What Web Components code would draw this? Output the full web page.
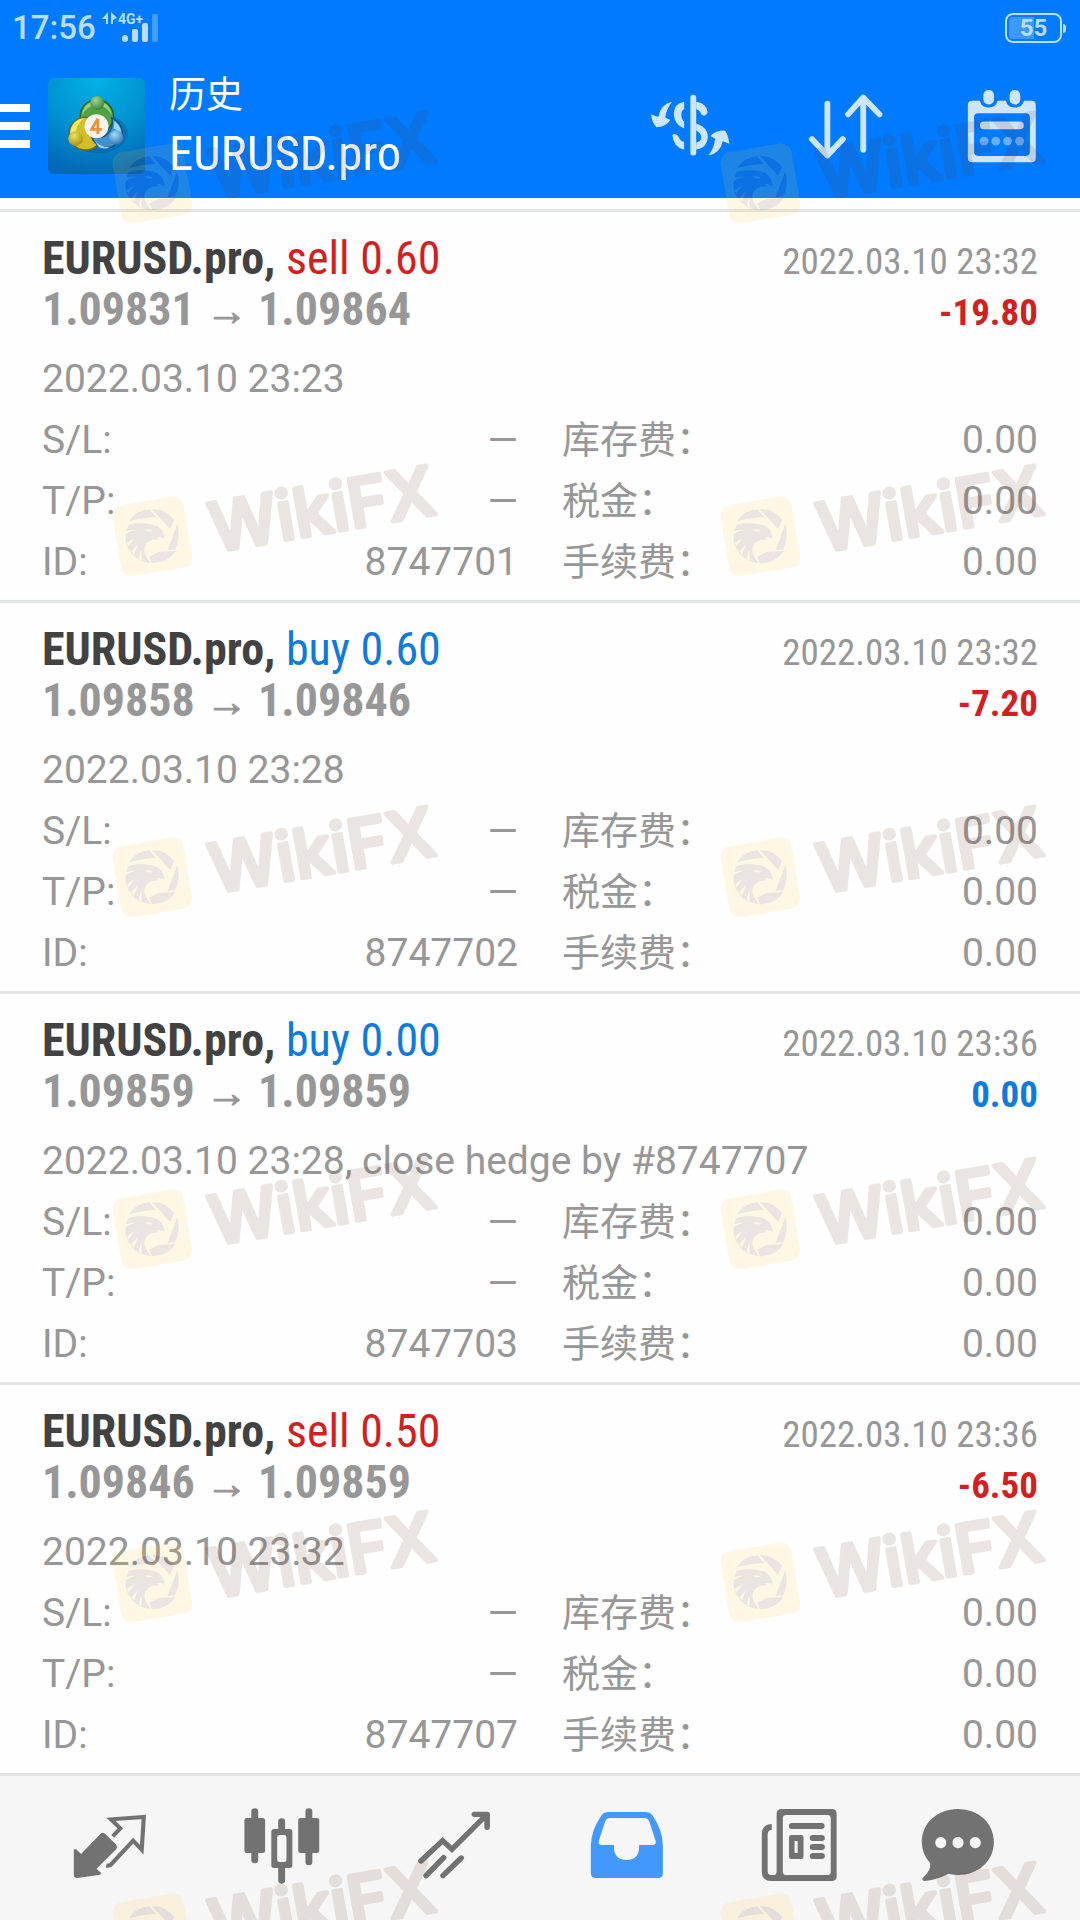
<!DOCTYPE html>
<html lang="zh-CN">
<head>
<meta charset="utf-8">
<meta name="viewport" content="width=device-width, initial-scale=1">
<title>历史</title>
<style>
  html, body { margin: 0; background: #fefefe; }
  body { font-family: Roboto, "Noto Sans CJK SC", sans-serif; }
</style>
</head>
<body>
<history-app></history-app>

<script>
const CONDENSED = '"Roboto Condensed", "Liberation Sans Narrow", Roboto, "Noto Sans CJK SC", sans-serif';

function define(name, html, setup) {
  const template = document.createElement('template');
  customElements.define(name, class extends HTMLElement {
    connectedCallback() {
      if (this.shadowRoot) return;
      const root = this.attachShadow({ mode: 'open' });
      template.innerHTML = typeof html === 'function' ? html(this) : html;
      root.append(template.content.cloneNode(true));
      if (setup) setup(this, root);
    }
  });
}

/* Time, signal strength and battery */
define('status-bar', `
  <style>
    :host { display: flex; justify-content: space-between; align-items: center; height: 56px; padding: 0 14px 0 12px; box-sizing: border-box; color: #b9dcff; }
    .left { display: flex; align-items: center; gap: 6px; }
    time { font-size: 33px; line-height: 56px; font-weight: 500; }
    svg { display: block; }
    .battery { display: flex; align-items: center; gap: 1px; }
    .cell { display: flex; align-items: center; justify-content: center; box-sizing: border-box; width: 57px; height: 30px; border: 2px solid; border-radius: 8px; font-size: 24px; line-height: 26px; font-weight: 700;
      background: linear-gradient(90deg, #3d98ff 52%, transparent 52%) content-box; padding: 2px; }
    .nub { width: 3px; height: 9px; border-radius: 0 3px 3px 0; background: currentColor; }
  </style>
  <div class="left">
    <time>17:56</time>
    <svg width="58" height="36" viewBox="102 9 58 36" fill="currentColor" aria-hidden="true">
      <path d="M108 11V23H106V18H102ZM111 11V23H113V19L117 17Z"/>
      <text x="118" y="23" font-family="Roboto, sans-serif" font-size="14" font-weight="700">4G+</text>
      <rect x="122" y="34" width="6" height="7" rx="3"/>
      <rect x="132" y="28" width="6" height="13" rx="2"/>
      <rect x="142" y="22" width="6" height="19" rx="2"/>
      <rect x="152" y="13" width="6" height="28" rx="2" opacity=".35"/>
    </svg>
  </div>
  <div class="battery"><span class="cell">55</span><span class="nub"></span></div>
`);

/* MetaTrader style app emblem */
define('app-emblem', `
  <style>:host { display: block; } svg { display: block; }</style>
  <svg width="97" height="96" viewBox="22 22 292 288" preserveAspectRatio="none" aria-hidden="true">
    <defs>
      <radialGradient id="bg" cx=".5" cy="0" r="1"><stop offset="0" stop-color="#03b2e6"/><stop offset=".55" stop-color="#0191d2"/><stop offset="1" stop-color="#0468b8"/></radialGradient>
      <radialGradient id="g" cx=".4" cy=".3" r=".8"><stop offset="0" stop-color="#a6d592"/><stop offset="1" stop-color="#2b7d2e"/></radialGradient>
      <radialGradient id="y" cx=".4" cy=".3" r=".8"><stop offset="0" stop-color="#efe060"/><stop offset="1" stop-color="#a08a08"/></radialGradient>
      <radialGradient id="b" cx=".4" cy=".3" r=".8"><stop offset="0" stop-color="#a4dcf8"/><stop offset="1" stop-color="#1b68ae"/></radialGradient>
    </defs>
    <rect x="22" y="22" width="292" height="288" rx="18" fill="url(#bg)"/>
    <ellipse cx="172" cy="188" rx="90" ry="60" fill="#044a80" opacity=".3"/>
    <g stroke-width="4">
      <circle cx="169" cy="137" r="50" fill="#54a044" stroke="#24601c"/>
      <path d="M124 134Q130 94 169 92Q208 94 214 134Q198 104 169 103Q140 104 124 134Z" fill="#9bd084"/>
      <circle cx="135" cy="189" r="49" fill="#d2bf28" stroke="#736b10"/>
      <path d="M90 188Q92 148 130 143Q108 160 103 196Z" fill="#f4e76c"/>
      <path d="M152 196A49 49 0 0 0 246 194Q248 158 214 142Q222 176 196 194Q176 206 152 196Z" fill="#3c93d3" stroke="#174f86"/>
      <path d="M222 151Q245 168 242 196Q232 176 220 174ZM160 207Q182 232 208 229Q194 238 176 230Z" fill="#9ed5f4"/>
    </g>
    <circle cx="170" cy="97" r="21" fill="url(#g)"/>
    <circle cx="105" cy="204" r="22" fill="url(#y)"/>
    <circle cx="227" cy="201" r="22" fill="url(#b)"/>
    <circle cx="168" cy="167" r="36" fill="#f7f4ef"/>
    <path d="M172 144L153 176H184M172 144V190" fill="none" stroke="#ec9138" stroke-width="8"/>
  </svg>
`);

/* Icon set: each drawing carries its own view box */
const ICONS = {
  currency: ['319 262 232 225', `
    <rect x="436" y="282" width="17" height="180" rx="8"/>
    <path d="M418 303Q388 308 388 340Q390 372 418 382V362Q409 352 410 340Q410 328 418 325ZM453 303Q484 308 486 334Q480 350 467 340Q465 328 453 325ZM453 367Q487 378 487 408Q484 440 453 445V424Q468 420 468 408Q466 395 453 388ZM384 401Q392 394 402 406Q406 418 418 422V445Q386 436 384 401Z"/>
    <path d="M383 303Q368 322 363 349L378 357Q365 378 338 378Q324 365 322 340L343 348Q350 310 383 303ZM488 462Q505 440 508 412L494 404Q508 388 536 388Q546 400 549 427L530 420Q522 457 488 462Z"/>`],
  sort: ['774 262 232 225', `
    <path d="M836 308V460M791 413L836 462L881 413M940 292V445M896 340L940 290L987 340" fill="none" stroke="currentColor" stroke-width="17" stroke-linecap="round" stroke-linejoin="round"/>`],
  calendar: ['1226 262 232 225', `
    <path fill-rule="evenodd" d="M1256 300H1278Q1282 320 1303 320Q1325 320 1329 300H1353Q1358 320 1379 320Q1401 320 1406 300H1428Q1440 300 1440 313V469Q1440 482 1428 482H1256Q1243 482 1243 469V313Q1243 300 1256 300ZM1273 337Q1261 337 1261 350V450Q1261 463 1273 463H1410Q1423 463 1423 450V350Q1423 337 1410 337Z"/>
    <rect x="1288" y="268" width="31" height="43" rx="15"/><rect x="1364" y="268" width="31" height="43" rx="15"/>
    <rect x="1278" y="361" width="127" height="23" rx="11"/>
    <g opacity=".5"><circle cx="1290" cy="419" r="13"/><circle cx="1324" cy="419" r="13"/><circle cx="1358" cy="419" r="13"/><circle cx="1393" cy="419" r="13"/></g>`],
  quotes: ['204 204 232 228', `
    <path d="M294 280Q300 276 306 281L338 314Q343 321 338 328L281 386L295 400Q293 404 288 405L224 414Q216 414 215 406V328Q222 326 225 331L236 342Z"/>
    <path d="M328 289L350 265L323 238L418 231L412 329L387 302L328 368Q319 379 309 377" fill="none" stroke="currentColor" stroke-width="12"/>`],
  chart: ['702 204 232 228', `
    <path d="M739 215V360M896 215V366M817 245V275M817 380V421" stroke="currentColor" stroke-width="20" stroke-linecap="round"/>
    <rect x="709" y="234" width="60" height="105" rx="7"/><rect x="865" y="234" width="61" height="105" rx="7"/>
    <path fill-rule="evenodd" d="M795 267H840Q848 267 848 275V376Q848 384 840 384H795Q787 384 787 376V275Q787 267 795 267ZM811 285Q804 285 804 292V359Q804 366 811 366H824Q831 366 831 359V292Q831 285 824 285Z"/>`],
  trend: ['1201 204 232 228', `
    <g fill="none" stroke="currentColor" stroke-width="16" stroke-linecap="round" stroke-linejoin="round">
      <path d="M1221 363L1284 302L1311 328L1408 228M1236 407L1287 353M1285 407L1338 354" stroke-linejoin="miter"/>
      <path d="M1376 223H1413V262"/></g>
    <path d="M1385 223H1420V258Z"/>`],
  inbox: ['134 204 232 228', `
    <path fill-rule="evenodd" d="M198 216H308Q320 216 326 224Q357 272 357 318V400Q357 414 343 414H162Q148 414 148 400V318Q148 272 180 224Q186 216 198 216ZM204 234Q194 234 190 243L171 303Q169 315 180 315H215Q213 360 252 360Q290 360 288 315H327Q338 315 336 303L317 243Q313 234 303 234Z"/>`],
  news: ['637 204 232 228', `
    <path fill-rule="evenodd" d="M706 207H851Q865 207 865 221V409Q865 423 851 423H676Q648 423 648 395V282Q648 253 677 252V269Q665 270 665 284V392Q665 405 675 405H681Q691 405 691 395V221Q691 207 706 207ZM719 225Q709 225 709 235V395Q709 405 719 405H838Q848 405 848 395V235Q848 225 838 225Z"/>
    <rect x="727" y="249" width="103" height="18" rx="8"/>
    <path fill-rule="evenodd" d="M734 285H762Q769 285 769 292V350Q769 357 762 357H734Q727 357 727 350V292Q727 285 734 285ZM743 303V339H752V303Z"/>
    <rect x="787" y="285" width="44" height="18" rx="9"/><rect x="787" y="312" width="44" height="18" rx="9"/><rect x="787" y="339" width="44" height="18" rx="9"/>`],
  chat: ['1098 204 232 228', `
    <path fill-rule="evenodd" d="M1214 207C1274 207 1318 250 1318 306C1318 365 1271 405 1214 405Q1200 405 1187 401Q1150 420 1117 423Q1106 421 1114 411Q1137 390 1133 369Q1109 341 1109 306C1109 250 1154 207 1214 207ZM1164 291a16 17 0 1 0 .1 0ZM1214 291a16 17 0 1 0 .1 0ZM1264 291a16 17 0 1 0 .1 0Z"/>`]
};
define('ui-icon', el => {
  const [box, shapes] = ICONS[el.getAttribute('name')];
  return `<style>:host { display: block; } svg { display: block; width: 80px; height: 76px; }</style>
  <svg viewBox="${box}" preserveAspectRatio="none" fill="currentColor" aria-hidden="true">${shapes}</svg>`;
});

define('app-header', `
  <style>
    :host { display: block; background: #007bff; }
    .bar { display: flex; align-items: center; height: 142px; padding-bottom: 2px; box-sizing: border-box; color: #fff; }
    button { border: 0; padding: 0; margin: 0; background: none; color: inherit; font: inherit; cursor: pointer; }
    .menu { display: flex; flex-direction: column; gap: 10px; width: 30px; margin-right: 18px; }
    .menu span { height: 8px; background: currentColor; }
    .titles { flex: 1; min-width: 0; margin-left: 24px; }
    h1, p { margin: 0; font-weight: 400; white-space: nowrap; }
    h1 { font-size: 37px; line-height: 56px; }
    p { font-family: ${CONDENSED}; font-size: 49px; line-height: 60px; }
    .actions { display: flex; color: #cde5fd; }
    .actions button { display: flex; align-items: center; justify-content: center; width: 156px; height: 140px; }
  </style>
  <status-bar></status-bar>
  <div class="bar">
    <button class="menu" aria-label="菜单"><span></span><span></span><span></span></button>
    <app-emblem></app-emblem>
    <div class="titles"><h1>历史</h1><p>EURUSD.pro</p></div>
    <div class="actions">
      <button aria-label="品种"><ui-icon name="currency"></ui-icon></button>
      <button aria-label="排序"><ui-icon name="sort"></ui-icon></button>
      <button aria-label="日期"><ui-icon name="calendar"></ui-icon></button>
    </div>
  </div>
`);

/* One closed deal */
define('deal-card', `
  <style>
    :host { display: block; border-top: 3px solid #e4e6e6; padding: 21px 42px 7px; color: #979797; font-size: 39px; }
    .row { display: flex; justify-content: space-between; align-items: baseline; height: 51px; font-family: ${CONDENSED}; font-size: 37px; line-height: 51px; white-space: nowrap; }
    h2 { margin: 0; font-size: 46px; font-weight: 700; color: #424242; }
    .side { font-weight: 400; }
    .prices { font-size: 46px; font-weight: 700; }
    .arrow { font-family: "Liberation Serif", serif; font-size: 42px; font-weight: 400; line-height: 1; -webkit-text-stroke: 1px currentColor; }
    .sell, .loss { color: #d11f22; }
    .buy, .even { color: #0d7bdc; }
    .profit { font-weight: 700; }
    .note { margin: 14px 0 0; line-height: 61px; white-space: nowrap; }
    dl { display: grid; grid-template-columns: 1fr 1fr; column-gap: 44px; margin: 0; line-height: 61px; }
    dl div { display: flex; justify-content: space-between; }
    dt, dd { margin: 0; }
    dt:lang(zh) { font-size: 38px; }
  </style>
  <div class="row"><h2>EURUSD.pro, <span class="side"></span></h2><time class="closed"></time></div>
  <div class="row"><span class="prices"><span class="from"></span> <span class="arrow">→</span> <span class="to"></span></span><span class="profit"></span></div>
  <p class="note"><slot></slot></p>
  <dl>
    <div><dt lang="en">S/L:</dt><dd>—</dd></div><div><dt>库存费：</dt><dd>0.00</dd></div>
    <div><dt lang="en">T/P:</dt><dd>—</dd></div><div><dt>税金：</dt><dd>0.00</dd></div>
    <div><dt lang="en">ID:</dt><dd class="id"></dd></div><div><dt>手续费：</dt><dd>0.00</dd></div>
  </dl>
`, (el, root) => {
  const get = name => el.getAttribute(name);
  for (const name of ['side', 'closed', 'from', 'to', 'profit', 'id'])
    root.querySelector('.' + name).textContent = get(name === 'id' ? 'ticket' : name);
  root.querySelector('.side').classList.add(get('side').split(' ')[0]);
  root.querySelector('.profit').classList.add(get('profit').startsWith('-') ? 'loss' : 'even');
});

define('tab-bar', `
  <style>
    :host { display: block; border-top: 3px solid #e3e3e3; background: #f6f6f6; }
    nav { display: grid; grid-template-columns: repeat(5, 172fr) 148fr; height: 144px; padding: 0 48px 4px 24px; box-sizing: border-box; }
    a { display: flex; align-items: center; justify-content: center; color: #727272; }
    a[aria-current] { color: #4299fb; }
  </style>
  <nav>
    <a href="#quotes" aria-label="行情"><ui-icon name="quotes"></ui-icon></a>
    <a href="#chart" aria-label="图表"><ui-icon name="chart"></ui-icon></a>
    <a href="#trade" aria-label="交易"><ui-icon name="trend"></ui-icon></a>
    <a href="#history" aria-label="历史" aria-current="page"><ui-icon name="inbox"></ui-icon></a>
    <a href="#news" aria-label="新闻"><ui-icon name="news"></ui-icon></a>
    <a href="#chat" aria-label="消息"><ui-icon name="chat"></ui-icon></a>
  </nav>
`);

/* Translucent brand stamp laid over the page */
define('brand-stamp', `
  <style>:host { display: block; position: absolute; opacity: .12; } svg { display: block; overflow: visible; }</style>
  <svg width="360" height="140" viewBox="0 0 1080 420">
    <rect x="49" y="151" width="216" height="216" rx="32" fill="#ffcc30" transform="rotate(-9.8 157 259)"/>
    <g fill="#612f1e">
      <path d="M87 214Q108 181 148 178L167 201Q120 203 87 214ZM156 177Q198 178 222 210L210 236ZM232 222Q243 262 225 298L203 300ZM176 306L227 303Q202 339 156 340L148 320Z"/>
      <path d="M86 224Q124 216 160 224Q190 231 194 267Q184 258 168 262L178 268Q150 267 138 283Q128 300 138 318L152 339Q108 336 86 298Q66 264 86 224Z"/>
      <text transform="translate(342 307) rotate(-9.8)" font-family="Inter, sans-serif" font-size="203" font-weight="500" stroke="#612f1e" stroke-width="13" stroke-linejoin="round">WikiFX</text>
    </g>
    <path d="M133 238L159 239Q150 251 133 238ZM74 246Q90 238 110 240Q90 242 76 254ZM80 280L104 264L86 288ZM94 304L114 282L102 314ZM116 326L124 296L126 332Z" fill="#ffcc30"/>
  </svg>
`);

define('history-app', `
  <style>
    :host { display: block; position: relative; overflow: hidden; }
    main { padding-top: 11px; }
    .stamps { position: absolute; inset: 0; overflow: hidden; pointer-events: none; }
  </style>
  <app-header></app-header>
  <main>
    <deal-card side="sell 0.60" closed="2022.03.10 23:32" from="1.09831" to="1.09864" profit="-19.80" ticket="8747701">2022.03.10 23:23</deal-card>
    <deal-card side="buy 0.60" closed="2022.03.10 23:32" from="1.09858" to="1.09846" profit="-7.20" ticket="8747702">2022.03.10 23:28</deal-card>
    <deal-card side="buy 0.00" closed="2022.03.10 23:36" from="1.09859" to="1.09859" profit="0.00" ticket="8747703">2022.03.10 23:28, close hedge by #8747707</deal-card>
    <deal-card side="sell 0.50" closed="2022.03.10 23:36" from="1.09846" to="1.09859" profit="-6.50" ticket="8747707">2022.03.10 23:32</deal-card>
  </main>
  <tab-bar></tab-bar>
  <div class="stamps" aria-hidden="true"></div>
`, (el, root) => {
  const layer = root.querySelector('.stamps');
  for (const top of [97, 450, 791, 1143, 1496, 1847])
    for (const left of [100, 708]) {
      const stamp = document.createElement('brand-stamp');
      stamp.style.left = left + 'px';
      stamp.style.top = top + 'px';
      layer.append(stamp);
    }
});
</script>
</body>
</html>
